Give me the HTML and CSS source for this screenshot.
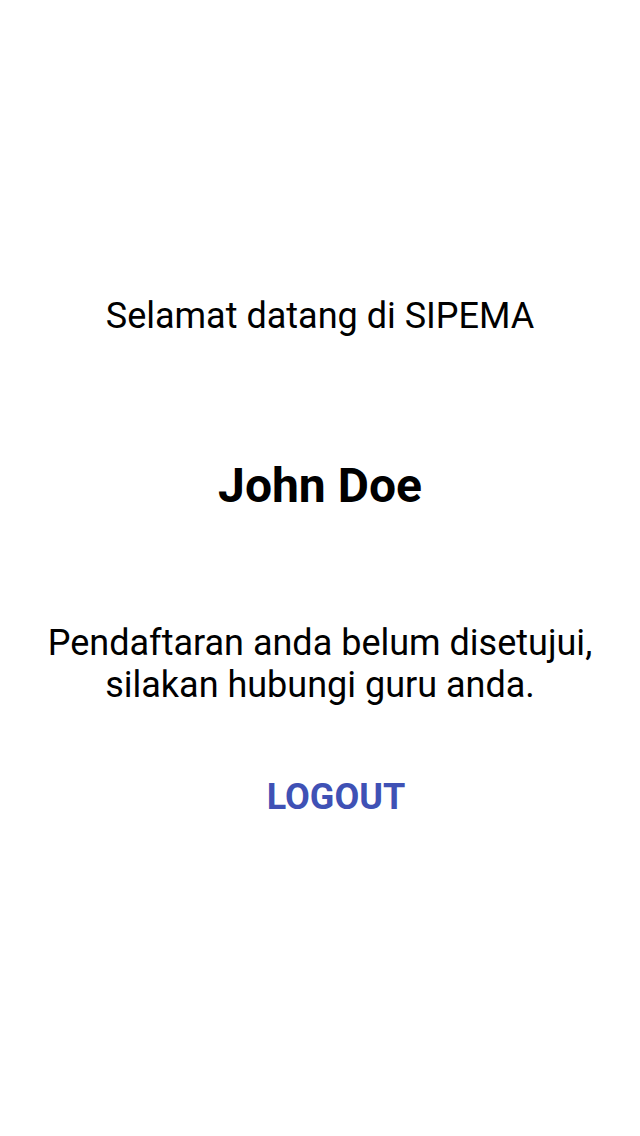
FILE: index.html
```html
<!DOCTYPE html>
<html>
<head>
<meta charset="utf-8">
<link rel="stylesheet" href="styles.css">
</head>
<body>
<main class="screen">
  <p class="welcome">Selamat datang di SIPEMA</p>
  <h1 class="name">John Doe</h1>
  <p class="message">Pendaftaran anda belum disetujui,<br>silakan hubungi guru anda.</p>
  <button class="logout">LOGOUT</button>
</main>
</body>
</html>
```
FILE: styles.css
```css
html, body {
  margin: 0;
  padding: 0;
  background: #ffffff;
}
body {
  font-family: Roboto, "Liberation Sans", sans-serif;
  color: #000000;
}
.screen {
  width: 640px;
  height: 1136px;
  display: flex;
  flex-direction: column;
  align-items: center;
  padding-top: 295px;
  box-sizing: border-box;
}
.welcome {
  margin: 0;
  font-size: 36px;
  line-height: 42px;
  text-align: center;
}
.name {
  margin: 121px 0 0 0;
  font-size: 48px;
  font-weight: 700;
  line-height: 56px;
  text-align: center;
}
.message {
  margin: 108px 0 0 0;
  font-size: 36px;
  line-height: 42px;
  text-align: center;
}
.logout {
  margin: 70px 0 0 32px;
  border: none;
  background: transparent;
  font-family: Roboto, "Liberation Sans", sans-serif;
  font-size: 36px;
  font-weight: 700;
  color: #3f51b5;
  padding: 0;
  line-height: 42px;
}
```
